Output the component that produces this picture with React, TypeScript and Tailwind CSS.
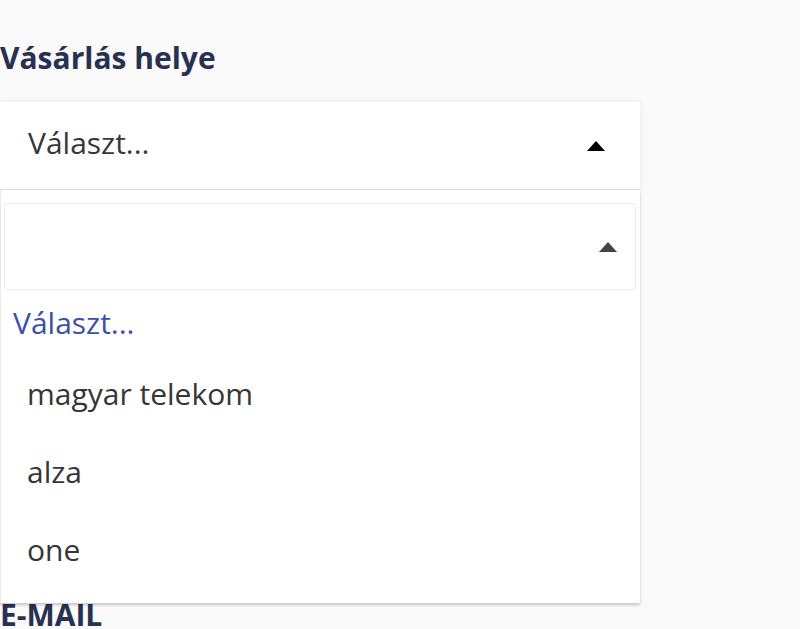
import type { ReactNode } from "react";

const options = ["magyar telekom", "alza", "one"];

function Caret({ color }: { color: string }): ReactNode {
  return (
    <svg width="18" height="10" viewBox="0 0 18 10" className="shrink-0">
      <polygon points="9,0 18,10 0,10" fill={color} />
    </svg>
  );
}

function Label({ children, className = "" }: { children: ReactNode; className?: string }): ReactNode {
  return (
    <div
      className={`text-[30px] leading-[36px] font-bold text-[#283152] ${className}`}
      style={{ fontFamily: '"Open Sans", sans-serif' }}
    >
      {children}
    </div>
  );
}

function Dropdown(): ReactNode {
  return (
    <div className="absolute left-0 top-[88px] w-[640px] bg-white border-l border-[#ebebeb] shadow-[0_2px_3px_rgba(0,0,0,0.22)] pt-[13px] pb-[14px]">
      <div className="ml-[3px] mr-[4px] h-[87px] rounded-[4px] border border-[#efedea] flex items-center justify-end pr-[18px]">
        <Caret color="#444444" />
      </div>
      <div className="pl-[12px] pt-[13px] pb-[12px] text-[30px] leading-[40px] text-[#3d50a8]">
        Választ...
      </div>
      {options.map((o) => (
        <div key={o} className="pl-[26px] py-[19px] text-[30px] leading-[40px] text-[#363636]">
          {o}
        </div>
      ))}
    </div>
  );
}

export default function App(): ReactNode {
  return (
    <div
      className="min-h-[629px] w-[800px] bg-[#fafafa] overflow-hidden pt-[40px]"
      style={{ fontFamily: '"Open Sans", sans-serif' }}
    >
      <Label>Vásárlás helye</Label>
      <div className="relative mt-[26px] w-[640px]">
        <div className="h-[88px] bg-white border-b border-[#e3e0dc] shadow-[0_0_6px_rgba(0,0,0,0.08)] flex items-start justify-between pl-[28px] pr-[35px]">
          <span className="pt-[21px] text-[30px] leading-[40px] text-[#383838]">Választ...</span>
          <span className="self-center">
            <Caret color="#000000" />
          </span>
        </div>
        <Dropdown />
      </div>
      <Label className="mt-[407px]">E-MAIL</Label>
    </div>
  );
}
